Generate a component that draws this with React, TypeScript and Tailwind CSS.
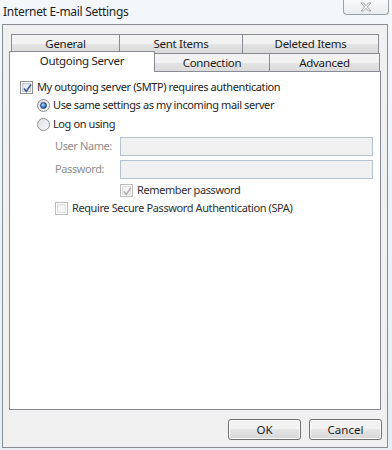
import React from "react";

const font = { fontFamily: '"Noto Sans", "Open Sans", Arial, sans-serif' };

function CheckBox({ checked, disabled }: { checked?: boolean; disabled?: boolean }) {
  return (
    <span className={`relative flex h-[13px] w-[13px] shrink-0 items-center justify-center border ${disabled ? "border-[#bcbcbc]" : "border-[#8e8f8f]"} bg-white`}>
      <span className={`h-[9px] w-[9px] border ${disabled ? "border-[#e0e0e0] bg-[#f4f4f4]" : "border-[#c3c9d2] bg-gradient-to-br from-[#dcdfe3] to-[#fbfbfb]"}`} />
      {checked ? (
        <svg className="absolute left-[1px] top-[1px]" width="11" height="11" viewBox="0 0 11 11">
          <path d="M2 5.5 L4.3 8.5 L9 1.5" fill="none" stroke={disabled ? "#b2b2b2" : "#3c5a99"} strokeWidth="1.6" />
        </svg>
      ) : null}
    </span>
  );
}

function Radio({ checked }: { checked?: boolean }) {
  return (
    <span className="flex h-[13px] w-[13px] shrink-0 items-center justify-center rounded-full border border-[#8e8f8f] bg-gradient-to-br from-[#dadde2] to-[#fafafa]">
      {checked ? (
        <span className="h-[7px] w-[7px] rounded-full border border-[#1c3f78] bg-[radial-gradient(circle_at_40%_35%,#c4e4ff_0%,#4a8ad6_45%,#173f80_100%)]" />
      ) : null}
    </span>
  );
}

function Tab({ label, w, selected }: { label: string; w: number; selected?: boolean }) {
  return (
    <div
      className={`-ml-px flex items-center justify-center border border-b-0 border-[#898c95] text-[11.5px] tracking-[-0.3px] text-[#1e1e1e] first:ml-0 ${
        selected ? "relative z-10 -mt-[2px] h-[21px] bg-white pb-[3px]" : "h-[19px] bg-gradient-to-b from-[#f2f2f2] from-50% via-[#e4e4e4] via-50% to-[#d9d9d9]"
      }`}
      style={{ width: w }}
    >
      {label}
    </div>
  );
}

function Btn({ label }: { label: string }) {
  return (
    <button className="flex h-[21px] w-[73px] items-center justify-center rounded-[3px] border border-[#707070] bg-gradient-to-b from-[#f2f2f2] from-50% via-[#e6e6e6] via-50% to-[#d6d6d6] text-[11.5px] text-[#1e1e1e] shadow-[inset_0_0_0_1px_#fcfcfc]">
      {label}
    </button>
  );
}

export default function App() {
  return (
    <div className="flex h-[450px] w-[392px] flex-col bg-gradient-to-b from-[#f4f7fa] to-[#e6eef6]" style={font}>
      <div className="flex h-[24px] shrink-0 items-start justify-between">
        <div className="pl-[3px] pt-[3px] text-[12px] tracking-[-0.3px] text-[#1e1e1e]">Internet E-mail Settings</div>
        <div className="mr-[3px] flex h-[15px] w-[46px] items-center justify-center rounded-b-[4px] border border-t-0 border-[#9aa0a8] bg-gradient-to-b from-[#f8f9fa] to-[#e9ecef]">
          <svg width="12" height="10" viewBox="0 0 12 10">
            <path d="M1 1 L3.5 1 L6 3.6 L8.5 1 L11 1 L7.4 5 L11 9 L8.5 9 L6 6.4 L3.5 9 L1 9 L4.6 5 Z" fill="#f4f4f4" stroke="#9b9b9b" strokeWidth="0.9" />
          </svg>
        </div>
      </div>
      <div className="ml-[2px] flex h-[424px] w-[386px] flex-col border border-[#8a8d92] bg-[#f0f0f0] px-[6px] pt-[9px]">
        <div className="flex pl-[2px]">
          <Tab label="General" w={109} />
          <Tab label="Sent Items" w={124} />
          <Tab label="Deleted Items" w={137} />
        </div>
        <div className="flex">
          <Tab label="Outgoing Server" w={146} selected />
          <Tab label="Connection" w={116} />
          <Tab label="Advanced" w={111} />
        </div>
        <div className="-mt-px flex h-[339px] w-[372px] flex-col border border-[#898c95] bg-white text-[11px] tracking-[-0.4px] text-[#1e1e1e]">
          <div className="mt-[7px] flex h-[17px] items-center gap-[4px] pl-[10px]">
            <CheckBox checked />
            <span>My outgoing server (SMTP) requires authentication</span>
          </div>
          <div className="flex h-[18px] items-center gap-[3px] pl-[27px]">
            <Radio checked />
            <span>Use same settings as my incoming mail server</span>
          </div>
          <div className="mt-px flex h-[18px] items-center gap-[3px] pl-[27px]">
            <Radio />
            <span>Log on using</span>
          </div>
          <div className="mt-[4px] flex h-[19px] items-center pl-[45px]">
            <span className="w-[65px] whitespace-nowrap text-[#8d8d8d]">User Name:</span>
            <div className="h-[19px] w-[253px] border border-[#b4c2d2] bg-[#f0f0f0]" />
          </div>
          <div className="mt-[4px] flex h-[19px] items-center pl-[45px]">
            <span className="w-[65px] whitespace-nowrap text-[#8d8d8d]">Password:</span>
            <div className="h-[19px] w-[253px] border border-[#b4c2d2] bg-[#f0f0f0]" />
          </div>
          <div className="mt-[4px] flex h-[15px] items-center gap-[4px] pl-[110px]">
            <CheckBox checked disabled />
            <span className="text-[#303030]">Remember password</span>
          </div>
          <div className="mt-[3px] flex h-[15px] items-center gap-[4px] pl-[45px]">
            <CheckBox disabled />
            <span className="text-[#303030]">Require Secure Password Authentication (SPA)</span>
          </div>
        </div>
        <div className="-mr-px mt-[9px] flex justify-end gap-[8px]">
          <Btn label="OK" />
          <Btn label="Cancel" />
        </div>
      </div>
    </div>
  );
}
